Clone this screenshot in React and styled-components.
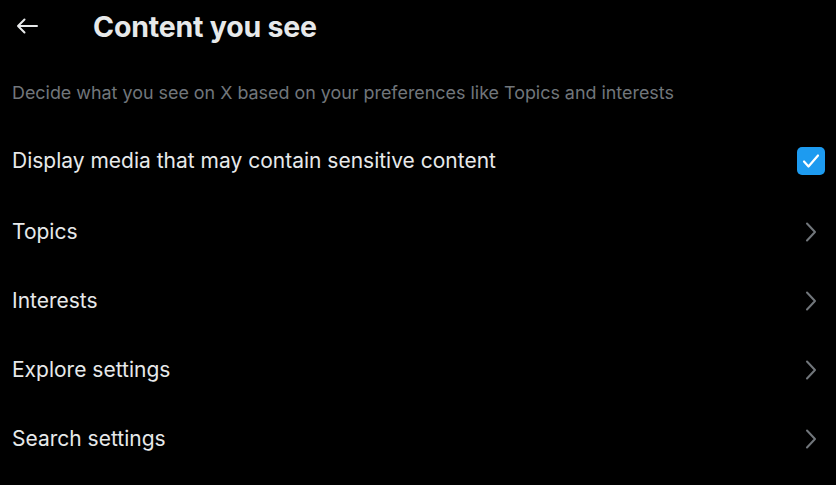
import React from 'react';
import styled, { createGlobalStyle } from 'styled-components';

const GlobalStyle = createGlobalStyle`
  html, body {
    margin: 0;
    background: #000;
  }
  body {
    font-family: Inter, "Noto Sans", sans-serif;
    color: #e7e9ea;
  }
`;

const Page = styled.div`
  width: 836px;
  height: 485px;
  background: #000;
  overflow: hidden;
  display: flex;
  flex-direction: column;
`;

const Header = styled.header`
  height: 52px;
  display: flex;
  align-items: center;
  padding-left: 14px;
`;

const BackButton = styled.button`
  width: 26px;
  height: 26px;
  padding: 0;
  border: 0;
  background: none;
  color: #e7e9ea;
  display: flex;
  align-items: center;
  justify-content: center;
  margin-right: 53px;
`;

const Title = styled.h1`
  margin: 0;
  font-size: 28.5px;
  font-weight: 700;
  letter-spacing: -0.2px;
`;

const Description = styled.p`
  margin: 29px 0 0;
  padding: 0 12px;
  font-size: 17.9px;
  color: #71767b;
  line-height: 24px;
`;

const List = styled.div`
  display: flex;
  flex-direction: column;
  margin-top: 19px;
`;

const Row = styled.div`
  height: ${ ({ $tall }) => ($tall ? 73 : 69) }px;
  display: flex;
  align-items: center;
  justify-content: space-between;
  padding: 0 11px 0 12px;
  box-sizing: border-box;
`;

const Label = styled.span`
  font-size: 21px;
  color: #e7e9ea;
`;

const Checkbox = styled.span`
  width: 28px;
  height: 28px;
  border-radius: 5px;
  background: #1d9bf0;
  display: flex;
  align-items: center;
  justify-content: center;
`;

const Chevron = styled.span`
  width: 28px;
  display: flex;
  justify-content: center;
  color: #71767b;
`;

const ArrowLeft = () => (
  <svg width='22' height='16' viewBox='0 0 22 16' fill='none' stroke='currentColor' strokeWidth='2' strokeLinecap='round' strokeLinejoin='round'>
    <path d='M21 8H2M8.5 1.5L2 8l6.5 6.5' />
  </svg>
);

const Check = () => (
  <svg width='18' height='16' viewBox='0 0 18 16' fill='none' stroke='#fff' strokeWidth='2.2' strokeLinecap='round' strokeLinejoin='round'>
    <path d='M2 8.5l4.5 5L16 2.5' />
  </svg>
);

const ChevronRight = () => (
  <svg width='12' height='20' viewBox='0 0 12 20' fill='none' stroke='currentColor' strokeWidth='2' strokeLinecap='round' strokeLinejoin='round'>
    <path d='M2 1.5l8 8.5-8 8.5' />
  </svg>
);

const links = ['Topics', 'Interests', 'Explore settings', 'Search settings'];

const App = () => (
  <Page>
    <GlobalStyle />
    <Header>
      <BackButton aria-label='Back'>
        <ArrowLeft />
      </BackButton>
      <Title>Content you see</Title>
    </Header>
    <Description>Decide what you see on X based on your preferences like Topics and interests</Description>
    <List>
      <Row $tall>
        <Label>Display media that may contain sensitive content</Label>
        <Checkbox>
          <Check />
        </Checkbox>
      </Row>
      { links.map((item) => (
        <Row key={ item }>
          <Label>{ item }</Label>
          <Chevron>
            <ChevronRight />
          </Chevron>
        </Row>
      )) }
    </List>
  </Page>
);

export default App;
